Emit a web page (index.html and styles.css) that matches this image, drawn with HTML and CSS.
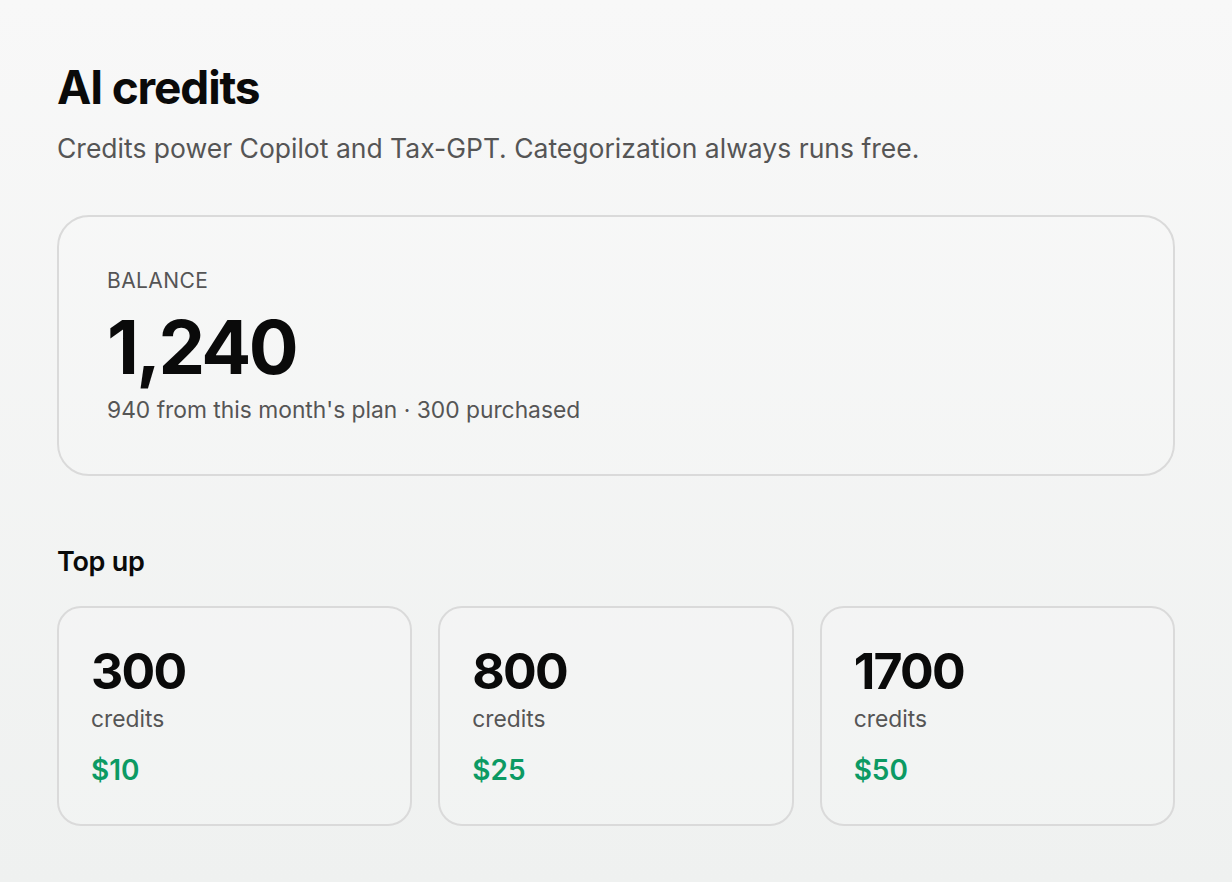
FILE: index.html
```html
<!DOCTYPE html>
<html lang="en">
<head>
<meta charset="UTF-8">
<meta name="viewport" content="width=device-width, initial-scale=1.0">
<title>AI credits</title>
<link rel="stylesheet" href="styles.css">
</head>
<body>

<div class="page">
    <h1>AI credits</h1>
    <p class="subtitle">Credits power Copilot and Tax-GPT. Categorization always runs free.</p>

    <div class="balance-card">
        <div class="label">BALANCE</div>
        <div class="balance">1,240</div>
        <div class="balance-note">940 from this month's plan · 300 purchased</div>
    </div>

    <h2>Top up</h2>
    <div class="packs">
        <div class="pack">
            <div class="pack-amount">300</div>
            <div class="pack-unit">credits</div>
            <div class="pack-price">$10</div>
        </div>
        <div class="pack">
            <div class="pack-amount">800</div>
            <div class="pack-unit">credits</div>
            <div class="pack-price">$25</div>
        </div>
        <div class="pack">
            <div class="pack-amount">1700</div>
            <div class="pack-unit">credits</div>
            <div class="pack-price">$50</div>
        </div>
    </div>
</div>

</body>
</html>
```

FILE: styles.css
```css
html {
    height: 100%;
}

body {
    font-family: Inter, "Noto Sans", sans-serif;
    background: linear-gradient(180deg, #f8f8f8 0%, #eff1f0 100%);
    margin: 0;
    padding: 0;
    min-height: 100%;
    color: #0a0a0a;
}

.page {
    padding: 59px 57px 40px;
}

h1 {
    font-size: 46px;
    font-weight: 700;
    letter-spacing: -0.025em;
    margin: 0;
    line-height: 56px;
}

.subtitle {
    font-size: 26.5px;
    color: #555;
    margin: 16px 0 0;
    line-height: 34px;
}

.balance-card {
    margin-top: 50px;
    border: 2px solid #dadada;
    border-radius: 32px;
    padding: 52px 48px 50px;
    background: rgba(255, 255, 255, 0.15);
}

.label {
    font-size: 21px;
    color: #555;
    letter-spacing: 0.02em;
    line-height: 24px;
}

.balance {
    font-size: 74px;
    font-weight: 700;
    letter-spacing: -0.035em;
    line-height: 80px;
    margin-top: 14px;
}

.balance-note {
    font-size: 22.8px;
    color: #555;
    line-height: 28px;
    margin-top: 9px;
}

h2 {
    font-size: 27px;
    font-weight: 600;
    margin: 70px 0 0;
    line-height: 32px;
    letter-spacing: -0.01em;
}

.packs {
    display: grid;
    grid-template-columns: repeat(3, 1fr);
    gap: 26px;
    margin-top: 28px;
}

.pack {
    border: 2px solid #dadada;
    border-radius: 24px;
    padding: 35px 32px 38px;
    background: rgba(255, 255, 255, 0.15);
}

.pack-amount {
    font-size: 50px;
    font-weight: 700;
    letter-spacing: -0.035em;
    line-height: 56px;
}

.pack-unit {
    font-size: 22.8px;
    color: #555;
    line-height: 28px;
    margin-top: 6px;
}

.pack-price {
    font-size: 28px;
    font-weight: 600;
    color: #0c9a63;
    line-height: 32px;
    margin-top: 21px;
}
```
